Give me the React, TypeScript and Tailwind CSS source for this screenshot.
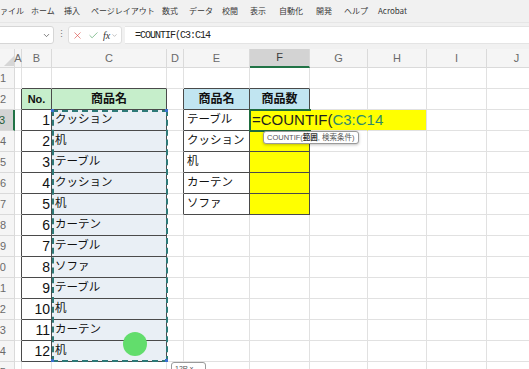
import { ChevronDown, X, Check } from "lucide-react";

const colW = [15, 7, 30, 115, 17, 66, 60, 58, 59, 60, 60];
const letters = ["", "A", "B", "C", "D", "E", "F", "G", "H", "I", "J"];
const items = ["クッション", "机", "テーブル", "クッション", "机", "カーテン", "テーブル", "ソファ", "テーブル", "机", "カーテン", "机"];
const kinds = ["テーブル", "クッション", "机", "カーテン", "ソファ"];

const menu: [string, number][] = [
  ["ファイル", 39],
  ["ホーム", 33],
  ["挿入", 27],
  ["ページレイアウト", 71],
  ["数式", 27],
  ["データ", 33],
  ["校閲", 28],
  ["表示", 29],
  ["自動化", 37],
  ["開発", 28],
  ["ヘルプ", 34],
  ["Acrobat", 50],
];

function Cell({ r, c }: { r: number; c: number }) {
  const inLeft = r >= 2 && r <= 14;
  const inRight = r >= 2 && r <= 7;
  let right = "border-r-[#e1e1e1]";
  let bottom = "border-b-[#e1e1e1]";
  let bg = "bg-white";
  let content: React.ReactNode = null;

  if ((c >= 1 && c <= 3 && inLeft) || (c >= 4 && c <= 6 && inRight)) right = "border-r-[#4a4a4a]";
  if ((c === 2 || c === 3) && r >= 1 && r <= 14) bottom = "border-b-[#4a4a4a]";
  if ((c === 5 || c === 6) && r >= 1 && r <= 7) bottom = "border-b-[#4a4a4a]";

  if (r === 2 && (c === 2 || c === 3)) bg = "bg-[#c6eecb]";
  if (r === 2 && (c === 5 || c === 6)) bg = "bg-[#c1e5f1]";
  if (c === 3 && r >= 3 && r <= 14) bg = "bg-[#e9eff5]";
  if (c === 6 && r >= 3 && r <= 7) bg = "bg-[#ffff00]";
  if (r === 3 && (c === 7 || c === 8)) bg = "bg-[#ffff00]";
  if (r === 3 && (c === 6 || c === 7)) right = "border-r-[#ffff00]";

  if (r === 2 && c === 2) content = <span className="w-full text-center text-[11px] font-bold">No.</span>;
  if (r === 2 && c === 3) content = <span className="w-full text-center text-[12px] font-bold">商品名</span>;
  if (r === 2 && c === 5) content = <span className="w-full text-center text-[12px] font-bold">商品名</span>;
  if (r === 2 && c === 6) content = <span className="w-full text-center text-[12px] font-bold">商品数</span>;
  if (c === 2 && r >= 3 && r <= 14)
    content = <span className="w-full text-right pr-[1px] text-[14px]">{r - 2}</span>;
  if (c === 3 && r >= 3 && r <= 14) content = <span className="pl-[3px] text-[11.5px]">{items[r - 3]}</span>;
  if (c === 5 && r >= 3 && r <= 7) content = <span className="pl-[3px] text-[11.5px]">{kinds[r - 3]}</span>;
  if (c === 6 && r === 3)
    content = (
      <span className="relative z-10 pl-[2px] text-[15px] whitespace-nowrap text-[#1f1f1f]">
        =COUNTIF(<span className="text-[#2f8a6a]">C3:C14</span>
      </span>
    );

  return (
    <div className={`flex items-center border-r border-b ${right} ${bottom} ${bg} text-[#111]`}>{content}</div>
  );
}

export default function App() {
  const rows = Array.from({ length: 15 }, (_, i) => i + 1);
  return (
    <div className="relative w-[529px] h-[369px] overflow-hidden bg-white font-['Liberation_Sans','Noto_Sans_CJK_JP',sans-serif]">
      {/* menu tabs */}
      <div className="h-[22px] bg-[#f1f1f1] flex items-center text-[8px] text-[#383838] font-['Noto_Sans_CJK_JP',sans-serif]">
        <div className="flex ml-[-8px]">
          {menu.map(([t, w]) => (
            <span key={t} className="whitespace-nowrap" style={{ width: w }}>
              {t}
            </span>
          ))}
        </div>
      </div>

      {/* formula bar */}
      <div className="h-[27px] bg-[#f1f1f1] flex pt-[3px] pb-[5px] border-t border-[#e6e6e6]">
        <div className="w-[58px] ml-[-4px] bg-white border border-[#d6d6d6] rounded-[3px] flex items-center justify-end pr-[2px]">
          <ChevronDown size={9} className="text-[#555]" />
        </div>
        <div className="w-[14px] flex items-center justify-center text-[9px] text-[#777]">⋮</div>
        <div className="w-[54px] bg-white border border-[#dedede] rounded-[3px] flex items-center pl-[3px]">
          <X size={11} strokeWidth={1.3} className="text-[#d9413a]" />
          <Check size={11} strokeWidth={1.3} className="text-[#3f9a53] ml-[5px]" />
          <span className="ml-[4px] italic text-[10px] font-['Liberation_Serif',serif] text-[#333]">fx</span>
          <ChevronDown size={7} className="text-[#999] ml-[1px]" />
        </div>
        <div className="flex-1 ml-[3px] bg-white border-y border-[#e4e4e4] flex items-center pl-[10px] text-[10px] tracking-[-1px] font-['Liberation_Mono',monospace] text-[#222]">
          =COUNTIF(C3:C14
        </div>
      </div>

      {/* sheet grid */}
      <div
        className="grid grid-rows-[19px_repeat(15,21px)]"
        style={{ gridTemplateColumns: colW.map((w) => `${w}px`).join(" ") }}
      >
        {letters.map((l, c) => (
          <div
            key={"h" + c}
            className={`flex items-center justify-center border-r border-b border-[#dadada] text-[11px] ${
              c === 6 ? "bg-[#d3d3d3] border-b-2 border-b-[#217346] text-[#3a3a3a]" : "bg-[#f5f5f5] text-[#6a6a6a]"
            }`}
          >
            {c === 0 ? (
              <svg width="12" height="12" viewBox="0 0 12 12" className="mt-[4px] ml-[1px]">
                <path d="M12 2 L12 12 L2 12 Z" fill="#d6d6d6" />
              </svg>
            ) : (
              l
            )}
          </div>
        ))}
        {rows.map((r) =>
          colW.map((_, c) =>
            c === 0 ? (
              <div
                key={r + "-0"}
                className={`flex items-center justify-end pr-[8px] overflow-hidden whitespace-nowrap border-b border-[#dadada] text-[11px] ${
                  r === 3 ? "bg-[#d3d3d3] border-r-2 border-r-[#217346] text-[#1e5c37]" : "bg-[#f5f5f5] border-r text-[#6a6a6a]"
                }`}
              >
                {r}
              </div>
            ) : (
              <Cell key={r + "-" + c} r={r} c={c} />
            )
          )
        )}
      </div>

      {/* copy range marquee around C3:C14 */}
      <div className="absolute left-[52px] top-[110px] w-[116px] h-[252px] border-2 border-dashed border-[#2e7a78]" />
      <div className="absolute left-[51px] top-[109px] w-[3px] h-[3px] bg-[#3b6fd1]" />
      <div className="absolute left-[165px] top-[109px] w-[3px] h-[3px] bg-[#3b6fd1]" />
      <div className="absolute left-[51px] top-[359px] w-[3px] h-[3px] bg-[#3b6fd1]" />
      <div className="absolute left-[165px] top-[359px] w-[3px] h-[3px] bg-[#3b6fd1]" />

      {/* active cell */}
      <div className="absolute left-[249px] top-[109px] w-[62px] h-[23px] border-2 border-r-0 border-[#1f6b3e] pointer-events-none" />

      {/* function hint */}
      <div className="absolute left-[263px] top-[131px] h-[13px] px-[3px] flex items-center bg-white border border-[#9a9a9a] rounded-[3px] shadow-[0_1px_3px_rgba(0,0,0,0.25)] text-[7.5px] text-[#555] whitespace-nowrap font-['Liberation_Sans','Noto_Sans_CJK_JP',sans-serif]">
        COUNTIF(<b className="text-[#333]">範囲</b>, 検索条件)
      </div>

      {/* cursor highlight */}
      <div className="absolute left-[123px] top-[332px] w-[24px] h-[24px] rounded-full bg-[#62dd6c]" />

      {/* size tip */}
      <div className="absolute left-[171px] top-[362px] w-[35px] h-[14px] bg-white border border-[#9a9a9a] rounded-[3px] text-[7px] text-[#555] px-[3px] pt-[1px]">
        12R x 1C
      </div>
    </div>
  );
}
